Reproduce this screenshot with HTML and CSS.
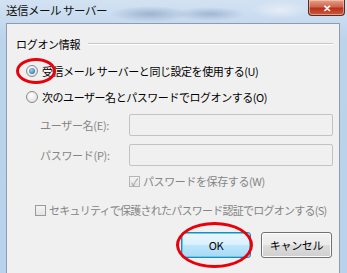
FILE: index.html
```html
<!doctype html>
<html>
<head>
<meta charset="utf-8">
<title>送信メール サーバー</title>
<link rel="stylesheet" href="styles.css">
</head>
<body>
<section class="window">
	<header class="titlebar">
		<span class="title">送信メール サーバー</span>
		<a href="javascript:;" class="close">&#x2715;</a>
	</header>
	<div class="panel">
		<div class="group-head">
			<span>ログオン情報</span>
			<i class="rule"></i>
		</div>
		<label class="opt first">
			<span class="radio on"></span>受信メール サーバーと同じ設定を使用する(U)
		</label>
		<label class="opt">
			<span class="radio"></span>次のユーザー名とパスワードでログオンする(O)
		</label>
		<div class="field first-field">
			<span class="field-name">ユーザー名(E):</span>
			<span class="input"></span>
		</div>
		<div class="field">
			<span class="field-name">パスワード(P):</span>
			<span class="input"></span>
		</div>
		<label class="check save">
			<span class="box ticked">&#x2713;</span>パスワードを保存する(W)
		</label>
		<label class="check spa">
			<span class="box"></span>セキュリティで保護されたパスワード認証でログオンする(S)
		</label>
		<div class="buttons">
			<a href="javascript:;" class="btn default">OK</a>
			<a href="javascript:;" class="btn">キャンセル</a>
		</div>
		<span class="mark mark-radio"></span>
		<span class="mark mark-ok"></span>
	</div>
</section>
</body>
</html>
```

FILE: styles.css
```css
html, body {
	margin: 0;
	padding: 0;
	height: 100%;
	overflow: hidden;
}
body {
	font-family: "Noto Sans CJK JP", "Noto Sans", sans-serif;
	font-size: 11px;
	color: #000;
}
.window {
	height: 100%;
	padding: 0 7px 0 6px;
	background:
		radial-gradient(ellipse 40px 8px at 150px 14px, rgba(120,145,180,.55), transparent),
		radial-gradient(ellipse 35px 7px at 210px 14px, rgba(120,145,180,.5), transparent),
		radial-gradient(ellipse 30px 9px at 280px 10px, rgba(235,240,248,.8), transparent),
		linear-gradient(#d3e2f2, #bcd3ec 40px, #b9d1ea);
	display: flex;
	flex-direction: column;
}
.titlebar {
	height: 23px;
	flex: none;
	display: flex;
	justify-content: space-between;
	align-items: flex-start;
}
.title {
	font-size: 11.5px;
	letter-spacing: -0.5px;
	line-height: 20px;
	color: #111;
}
.close {
	width: 37px;
	height: 16px;
	margin-right: -5px;
	border: 1px solid #5a2a24;
	border-top: none;
	border-radius: 0 0 4px 4px;
	background: linear-gradient(#e4a08c, #d0654c 45%, #b8321c 55%, #cc5a3e);
	box-shadow: inset 0 0 0 1px rgba(255,220,200,.5);
	color: #fff;
	font-size: 10px;
	font-weight: bold;
	line-height: 15px;
	text-align: center;
	text-decoration: none;
	box-sizing: border-box;
}
.panel {
	flex: 1;
	position: relative;
	background: #f0f0f0;
	border: 1px solid #8e9cad;
	border-bottom: none;
	padding: 0 6px 0 9px;
}
.group-head {
	display: flex;
	align-items: center;
	height: 14px;
	margin-top: 13px;
}
.group-head span {
	letter-spacing: -0.3px;
}
.rule {
	flex: 1;
	height: 0;
	margin-left: 8px;
	border-top: 1px solid #c8c8c8;
	border-bottom: 1px solid #fff;
}
.opt {
	display: flex;
	align-items: center;
	height: 16px;
	margin-left: 10px;
	letter-spacing: -0.45px;
}
.opt.first {
	margin-top: 12px;
}
.opt + .opt {
	margin-top: 10px;
}
.radio {
	width: 12px;
	height: 12px;
	border: 1px solid #8a8a8a;
	border-radius: 50%;
	background: radial-gradient(circle at 40% 35%, #fff, #d8d8d8);
	margin-right: 4px;
	box-sizing: border-box;
	position: relative;
}
.radio.on::after {
	content: "";
	position: absolute;
	left: 2px;
	top: 2px;
	width: 6px;
	height: 6px;
	border-radius: 50%;
	background: radial-gradient(circle at 40% 35%, #9ed0f5, #1d5f9a);
}
.field {
	display: flex;
	align-items: center;
	margin-left: 24px;
	color: #858585;
}
.first-field {
	margin-top: 9px;
}
.field + .field {
	margin-top: 8px;
}
.field-name {
	width: 89px;
	letter-spacing: -0.3px;
}
.input {
	width: 204px;
	height: 22px;
	border: 1px solid #c3c3c3;
	border-radius: 2px;
	background: #f0f0f0;
	box-sizing: border-box;
}
.check {
	display: flex;
	align-items: center;
	height: 16px;
	color: #858585;
	letter-spacing: -0.4px;
}
.save {
	margin-top: 7px;
	margin-left: 113px;
}
.spa {
	margin-top: 13px;
	margin-left: 19px;
	letter-spacing: -0.75px;
}
.box {
	width: 11px;
	height: 11px;
	border: 1px solid #9a9a9a;
	background: linear-gradient(#f4f4f4, #e4e4e4);
	margin-right: 3px;
	box-sizing: border-box;
	font-size: 10px;
	line-height: 9px;
	text-align: center;
	color: #8d8d8d;
}
.box.ticked {
	border-color: #b5b5b5;
}
.buttons {
	display: flex;
	justify-content: flex-end;
	gap: 10px;
	margin-top: 14px;
	margin-right: 1px;
}
.btn {
	width: 71px;
	height: 26px;
	border: 1px solid #707070;
	border-radius: 3px;
	background: linear-gradient(#f2f2f2, #ebebeb 50%, #dddddd 51%, #cfcfcf);
	box-shadow: inset 0 0 0 1px #fcfcfc;
	color: #000;
	text-decoration: none;
	text-align: center;
	line-height: 24px;
	box-sizing: border-box;
	letter-spacing: -0.3px;
}
.btn.default {
	width: 70px;
	border-color: #3c7fb1;
	background: linear-gradient(#eaf6fd, #d9f0fc 50%, #bee6fd 51%, #a7d9f5);
	box-shadow: inset 0 0 0 1px #48d8fb;
}
.mark {
	position: absolute;
	border: 3px solid #e8000b;
	border-radius: 50%;
	box-sizing: border-box;
	pointer-events: none;
}
.mark-radio {
	left: 9px;
	top: 34px;
	width: 40px;
	height: 26px;
}
.mark-ok {
	left: 169px;
	top: 198px;
	width: 77px;
	height: 46px;
}
```
